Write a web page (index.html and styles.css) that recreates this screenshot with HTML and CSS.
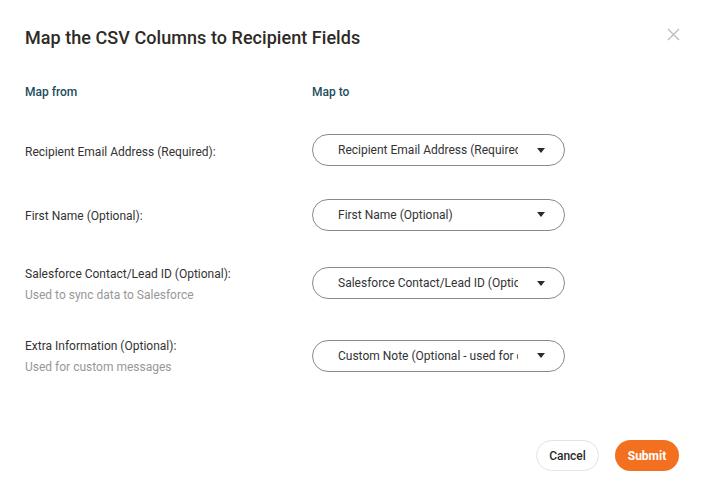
FILE: index.html
```html
<!DOCTYPE html>
<html>
<head>
<meta charset="utf-8">
<link rel="stylesheet" href="styles.css">
</head>
<body>
<div class="dialog">
  <button class="close" aria-label="Close">
    <svg width="13" height="13" viewBox="0 0 13 13"><path d="M1 1L12 12M12 1L1 12" stroke="#bdbdbd" stroke-width="1.4" fill="none"/></svg>
  </button>
  <h1 class="title">Map the CSV Columns to Recipient Fields</h1>
  <div class="grid">
    <div class="head">Map from</div>
    <div class="head">Map to</div>

    <div class="label r1"><div>Recipient Email Address (Required):</div></div>
    <div class="select r1"><span class="val">Recipient Email Address (Required)</span><span class="caret"></span></div>

    <div class="label r2"><div>First Name (Optional):</div></div>
    <div class="select r2"><span class="val">First Name (Optional)</span><span class="caret"></span></div>

    <div class="label r3"><div>Salesforce Contact/Lead ID (Optional):</div><div class="sub">Used to sync data to Salesforce</div></div>
    <div class="select r3"><span class="val">Salesforce Contact/Lead ID (Optional)</span><span class="caret"></span></div>

    <div class="label r4"><div>Extra Information (Optional):</div><div class="sub">Used for custom messages</div></div>
    <div class="select r4"><span class="val">Custom Note (Optional - used for custom messages)</span><span class="caret"></span></div>
  </div>
  <div class="actions">
    <button class="btn cancel">Cancel</button>
    <button class="btn submit">Submit</button>
  </div>
</div>
</body>
</html>
```

FILE: styles.css
```css
html, body {
  margin: 0;
  padding: 0;
  background: #ffffff;
}
body {
  font-family: Roboto, "Liberation Sans", Arial, sans-serif;
  color: #333333;
}
.dialog {
  position: relative;
  width: 701px;
  height: 492px;
  box-sizing: border-box;
  padding: 27px 22px 21px 25px;
  display: flex;
  flex-direction: column;
}
.close {
  position: absolute;
  top: 28px;
  left: 667px;
  width: 13px;
  height: 13px;
  padding: 0;
  border: none;
  background: none;
  display: block;
}
.close svg { display: block; }
.title {
  margin: 0;
  font-size: 18px;
  line-height: 22px;
  font-weight: 500;
  color: #2e2a25;
  letter-spacing: 0.05px;
}
.grid {
  display: grid;
  grid-template-columns: 287px 253px;
  grid-template-rows: 14px 32px 32px 42px 42px;
  row-gap: 32px;
  margin-top: 36px;
}
.grid > .head { align-self: start; }
.head {
  font-size: 12px;
  line-height: 14px;
  font-weight: 500;
  color: #1d4d5e;
}
.grid .r1 { margin-top: 6px; }
.grid .r2 { margin-top: 7px; }
.grid .r3 { margin-top: 6px; }
.grid .r4 { margin-top: 3px; }
.grid .label { padding-top: 4px; }
.grid .label.r3, .grid .label.r4 { padding-top: 3px; }
.label {
  display: flex;
  flex-direction: column;
  justify-content: center;
  font-size: 12px;
  line-height: 21px;
  color: #333333;
}
.sub {
  color: #979797;
}
.select {
  align-self: center;
  height: 32px;
  box-sizing: border-box;
  border: 1px solid #8a8a8a;
  border-radius: 16px;
  display: flex;
  align-items: center;
  padding-left: 25px;
  padding-right: 19px;
  font-size: 12px;
  color: #333333;
}
.val {
  flex: 1;
  white-space: nowrap;
  overflow: hidden;
  min-width: 0;
  max-width: 180px;
}
.caret {
  margin-left: auto;
  width: 0;
  height: 0;
  border-left: 4.5px solid transparent;
  border-right: 4.5px solid transparent;
  border-top: 5px solid #2b2b2b;
}
.actions {
  margin-top: auto;
  display: flex;
  justify-content: flex-end;
  gap: 16px;
}
.btn {
  height: 31px;
  border-radius: 16px;
  font-family: Roboto, "Liberation Sans", Arial, sans-serif;
  font-size: 12px;
  font-weight: 500;
  padding: 0;
  cursor: pointer;
}
.cancel {
  width: 63px;
  background: #ffffff;
  border: 1px solid #e3e3e3;
  color: #2b2b2b;
}
.submit {
  width: 64px;
  background: #f37021;
  border: none;
  color: #ffffff;
  font-weight: 700;
}
```
